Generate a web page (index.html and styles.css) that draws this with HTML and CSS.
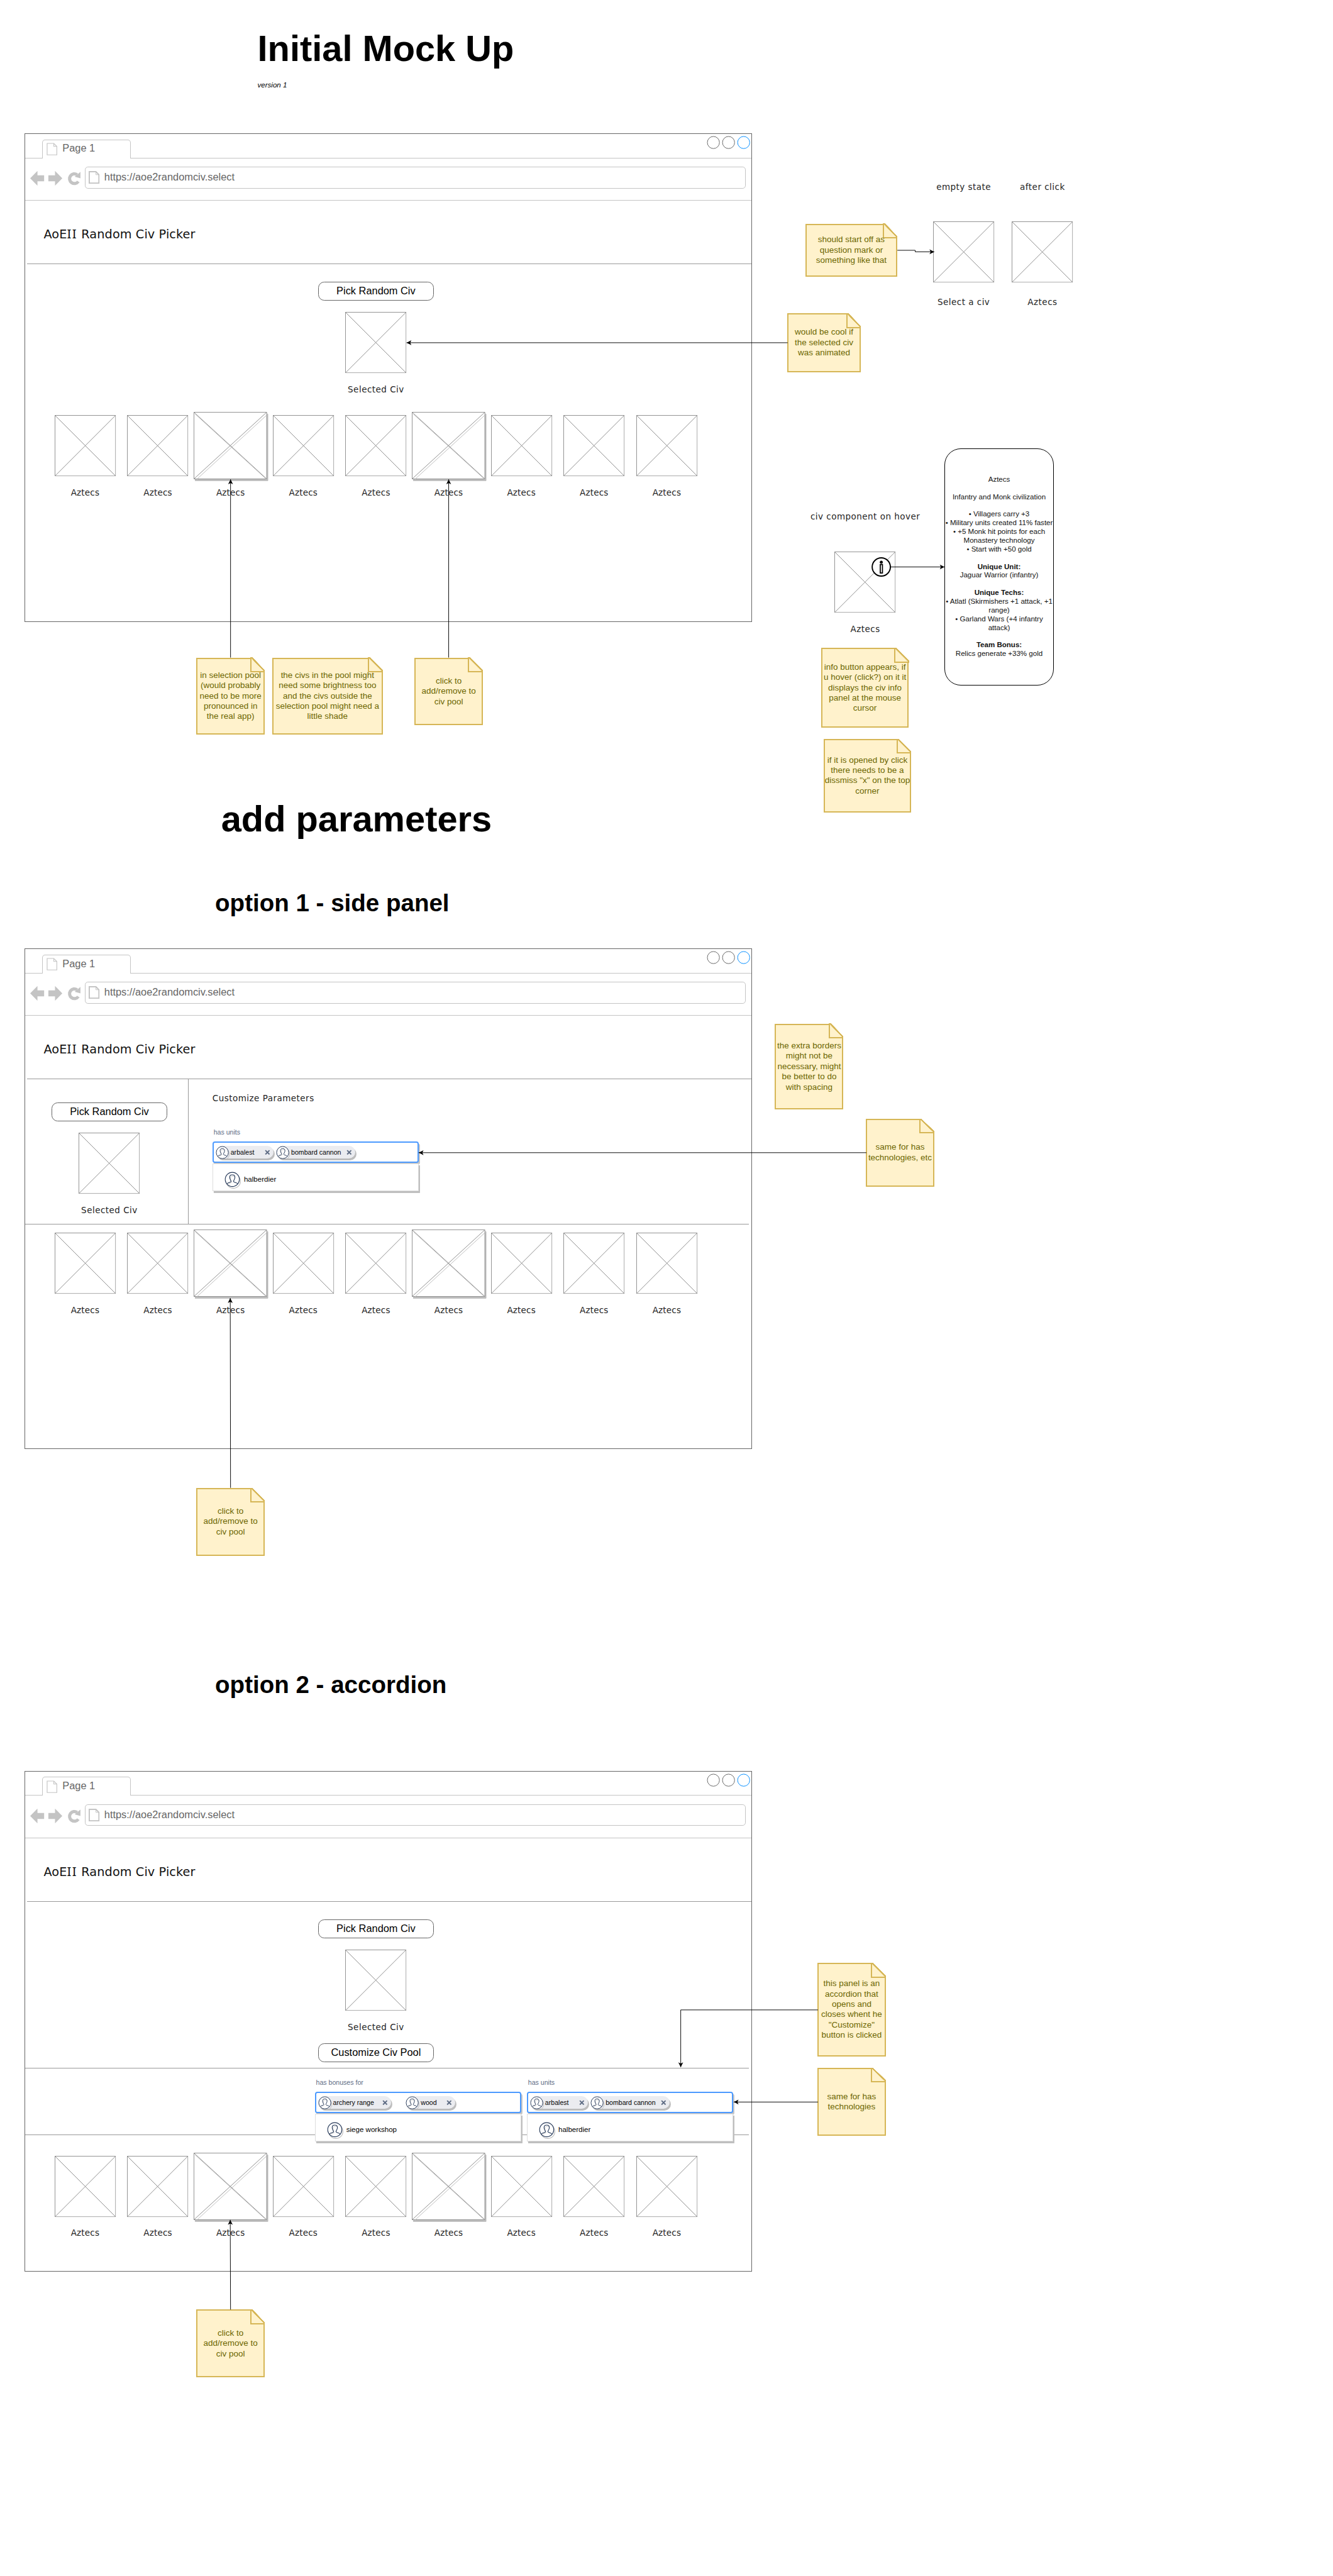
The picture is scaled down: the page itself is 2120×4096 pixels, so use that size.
FILE: index.html
```html
<!DOCTYPE html>
<html lang="en">
<head>
<meta charset="utf-8">
<title>AoEII Random Civ Picker - Mock Up</title>
<link rel="stylesheet" href="styles.css">
</head>
<body>
<svg class="defs" width="0" height="0" aria-hidden="true">
  <symbol id="pic" viewBox="0 0 101 101"><path d="M.5.5h100v100H.5zM.5.5l100 100M100.5.5l-100 100" fill="none" stroke="#8c8c8c"/></symbol>
  <symbol id="pic-big" viewBox="0 0 124 115">
    <path d="M2.500 3.500h120v110h-120z" fill="#bdbdbd" stroke="#bdbdbd"/>
    <path d="M.5.5h120v110H.5z" fill="#fff" stroke="#8c8c8c"/>
    <path d="M2.500 3.500l118 108M122.500 3.500l-120 110" fill="none" stroke="#bdbdbd"/>
    <path d="M.5.5l120 110M120.500.5l-120 110" fill="none" stroke="#8c8c8c"/>
  </symbol>
  <symbol id="page" viewBox="0 0 18 21"><path d="M1 1h11l5 5v14H1zM12 1v5h5" fill="#fff" stroke="#c4c4c4" stroke-width="1.200"/></symbol>
  <symbol id="page-bold" viewBox="0 0 18 21"><path d="M1 1h11l5 5v14H1z" fill="#fff" stroke="#c4c4c4" stroke-width="2"/><path d="M12 1v5h5" fill="none" stroke="#c4c4c4"/></symbol>
  <symbol id="nav" viewBox="0 0 84 26">
    <path d="M0 13L12 .8V8h11v10H12v7.200zM53 13L41 .8V8H30v10h11v7.200z" fill="#c4c4c4"/>
    <path d="M79.500 18.300A8 8 0 1 1 77.500 7" fill="none" stroke="#c4c4c4" stroke-width="5.200"/>
    <path d="M83 2.300L83 13L73.500 10.500z" fill="#c4c4c4"/>
  </symbol>
  <symbol id="dots" viewBox="0 0 72 22"><g fill="#fff"><circle cx="11" cy="11" r="10" stroke="#666"/><circle cx="36" cy="11" r="10" stroke="#666"/><circle cx="61" cy="11" r="10" stroke="#008cff"/></g></symbol>
  <symbol id="user" viewBox="0 0 23 24">
    <circle cx="12.500" cy="13.500" r="10" fill="none" stroke="#bdbdbd"/>
    <circle cx="11" cy="11" r="10" fill="#fff" stroke="#253858"/>
    <path d="M5 18.200C5 15.500 10.500 17 10 14.300C8.500 12.500 8 9 9 7.500C10 6 14 6 15 7.500" fill="none" stroke="#c4c4c4" stroke-width=".8"/>
    <path d="M3.500 17.500C4 14.800 9.300 15.800 9.300 13.800C9.300 12.500 7.300 10.800 7.300 8C7.300 5.500 8.800 4.500 11 4.500S14.700 5.500 14.700 8C14.700 10.800 12.700 12.500 12.700 13.800C12.700 15.800 18 14.800 18.500 17.500" fill="none" stroke="#253858"/>
  </symbol>
  <symbol id="x" viewBox="0 0 10 10"><path d="M1.300 1.300l7.400 7.400M8.700 1.300L1.300 8.700" stroke="#5e6c84" stroke-width="2.200"/></symbol>
</svg>

<main class="canvas">
  <h1 class="heading h-title">Initial Mock Up</h1>
  <p class="version">version 1</p>
  <h1 class="heading h-params">add parameters</h1>
  <h2 class="heading h-opt1">option 1 - side panel</h2>
  <h2 class="heading h-opt2">option 2 - accordion</h2>

  <section class="window win-1">
    <header class="tabbar"><div class="tab"><svg class="i-page"><use href="#page"/></svg><span>Page 1</span></div><svg class="i-dots"><use href="#dots"/></svg></header>
    <nav class="navbar"><svg class="i-nav"><use href="#nav"/></svg><div class="url"><svg class="i-page2"><use href="#page-bold"/></svg><span>https://aoe2randomciv.select</span></div></nav>
    <div class="title"><span>AoE<i>II</i> Random Civ Picker</span></div>
    <div class="picker"><div class="btn">Pick Random Civ</div><svg class="pic"><use href="#pic"/></svg><span class="label">Selected Civ</span></div>
    <div class="pool">
      <div class="civ"><svg class="pic"><use href="#pic"/></svg><span class="label">Aztecs</span></div>
      <div class="civ"><svg class="pic"><use href="#pic"/></svg><span class="label">Aztecs</span></div>
      <div class="civ on"><svg class="pic"><use href="#pic-big"/></svg><span class="label">Aztecs</span></div>
      <div class="civ"><svg class="pic"><use href="#pic"/></svg><span class="label">Aztecs</span></div>
      <div class="civ"><svg class="pic"><use href="#pic"/></svg><span class="label">Aztecs</span></div>
      <div class="civ on"><svg class="pic"><use href="#pic-big"/></svg><span class="label">Aztecs</span></div>
      <div class="civ"><svg class="pic"><use href="#pic"/></svg><span class="label">Aztecs</span></div>
      <div class="civ"><svg class="pic"><use href="#pic"/></svg><span class="label">Aztecs</span></div>
      <div class="civ"><svg class="pic"><use href="#pic"/></svg><span class="label">Aztecs</span></div>
    </div>
  </section>

  <section class="window win-2">
    <header class="tabbar"><div class="tab"><svg class="i-page"><use href="#page"/></svg><span>Page 1</span></div><svg class="i-dots"><use href="#dots"/></svg></header>
    <nav class="navbar"><svg class="i-nav"><use href="#nav"/></svg><div class="url"><svg class="i-page2"><use href="#page-bold"/></svg><span>https://aoe2randomciv.select</span></div></nav>
    <div class="title"><span>AoE<i>II</i> Random Civ Picker</span></div>
    <div class="split">
      <div class="picker side"><div class="btn">Pick Random Civ</div><svg class="pic"><use href="#pic"/></svg><span class="label">Selected Civ</span></div>
      <div class="params">
        <span class="label">Customize Parameters</span>
        <div class="field">
          <span class="field-label">has units</span>
          <div class="select">
            <div class="chip w95"><svg class="user"><use href="#user"/></svg><span>arbalest</span><svg class="x"><use href="#x"/></svg></div>
            <div class="chip w130"><svg class="user"><use href="#user"/></svg><span>bombard cannon</span><svg class="x"><use href="#x"/></svg></div>
          </div>
          <div class="menu"><svg class="user"><use href="#user"/></svg><span>halberdier</span></div>
        </div>
      </div>
    </div>
    <div class="pool">
      <div class="civ"><svg class="pic"><use href="#pic"/></svg><span class="label">Aztecs</span></div>
      <div class="civ"><svg class="pic"><use href="#pic"/></svg><span class="label">Aztecs</span></div>
      <div class="civ on"><svg class="pic"><use href="#pic-big"/></svg><span class="label">Aztecs</span></div>
      <div class="civ"><svg class="pic"><use href="#pic"/></svg><span class="label">Aztecs</span></div>
      <div class="civ"><svg class="pic"><use href="#pic"/></svg><span class="label">Aztecs</span></div>
      <div class="civ on"><svg class="pic"><use href="#pic-big"/></svg><span class="label">Aztecs</span></div>
      <div class="civ"><svg class="pic"><use href="#pic"/></svg><span class="label">Aztecs</span></div>
      <div class="civ"><svg class="pic"><use href="#pic"/></svg><span class="label">Aztecs</span></div>
      <div class="civ"><svg class="pic"><use href="#pic"/></svg><span class="label">Aztecs</span></div>
    </div>
  </section>

  <section class="window win-3">
    <header class="tabbar"><div class="tab"><svg class="i-page"><use href="#page"/></svg><span>Page 1</span></div><svg class="i-dots"><use href="#dots"/></svg></header>
    <nav class="navbar"><svg class="i-nav"><use href="#nav"/></svg><div class="url"><svg class="i-page2"><use href="#page-bold"/></svg><span>https://aoe2randomciv.select</span></div></nav>
    <div class="title"><span>AoE<i>II</i> Random Civ Picker</span></div>
    <div class="picker"><div class="btn">Pick Random Civ</div><svg class="pic"><use href="#pic"/></svg><span class="label">Selected Civ</span><div class="btn">Customize Civ Pool</div></div>
    <div class="accordion">
      <div class="field">
        <span class="field-label">has bonuses for</span>
        <div class="select spread">
          <div class="chip w120"><svg class="user"><use href="#user"/></svg><span>archery range</span><svg class="x"><use href="#x"/></svg></div>
          <div class="chip w80"><svg class="user"><use href="#user"/></svg><span>wood</span><svg class="x"><use href="#x"/></svg></div>
        </div>
        <div class="menu"><svg class="user"><use href="#user"/></svg><span>siege workshop</span></div>
      </div>
      <div class="field">
        <span class="field-label">has units</span>
        <div class="select">
          <div class="chip w95"><svg class="user"><use href="#user"/></svg><span>arbalest</span><svg class="x"><use href="#x"/></svg></div>
          <div class="chip w130"><svg class="user"><use href="#user"/></svg><span>bombard cannon</span><svg class="x"><use href="#x"/></svg></div>
        </div>
        <div class="menu"><svg class="user"><use href="#user"/></svg><span>halberdier</span></div>
      </div>
    </div>
    <div class="pool">
      <div class="civ"><svg class="pic"><use href="#pic"/></svg><span class="label">Aztecs</span></div>
      <div class="civ"><svg class="pic"><use href="#pic"/></svg><span class="label">Aztecs</span></div>
      <div class="civ on"><svg class="pic"><use href="#pic-big"/></svg><span class="label">Aztecs</span></div>
      <div class="civ"><svg class="pic"><use href="#pic"/></svg><span class="label">Aztecs</span></div>
      <div class="civ"><svg class="pic"><use href="#pic"/></svg><span class="label">Aztecs</span></div>
      <div class="civ on"><svg class="pic"><use href="#pic-big"/></svg><span class="label">Aztecs</span></div>
      <div class="civ"><svg class="pic"><use href="#pic"/></svg><span class="label">Aztecs</span></div>
      <div class="civ"><svg class="pic"><use href="#pic"/></svg><span class="label">Aztecs</span></div>
      <div class="civ"><svg class="pic"><use href="#pic"/></svg><span class="label">Aztecs</span></div>
    </div>
  </section>

  <div class="state st-empty"><span class="label">empty state</span><svg class="pic"><use href="#pic"/></svg><span class="label">Select a civ</span></div>
  <div class="state st-after"><span class="label">after click</span><svg class="pic"><use href="#pic"/></svg><span class="label">Aztecs</span></div>
  <div class="state st-hover"><span class="label">civ component on hover</span><svg class="pic"><use href="#pic"/></svg><span class="label">Aztecs</span></div>

  <article class="info"><p>Aztecs<br><br>Infantry and Monk civilization<br><br>• Villagers carry +3<br>• Military units created 11% faster<br>• +5 Monk hit points for each<br>Monastery technology<br>• Start with +50 gold<br><br><b>Unique Unit:</b><br>Jaguar Warrior (infantry)<br><br><b>Unique Techs:</b><br>• Atlatl (Skirmishers +1 attack, +1<br>range)<br>• Garland Wars (+4 infantry<br>attack)<br><br><b>Team Bonus:</b><br>Relics generate +33% gold</p></article>

  <aside class="note n-a">should start off as<br>question mark or<br>something like that</aside>
  <aside class="note n-b">would be cool if<br>the selected civ<br>was animated</aside>
  <aside class="note n-c">info button appears, if<br>u hover (click?) on it it<br>displays the civ info<br>panel at the mouse<br>cursor</aside>
  <aside class="note n-d">if it is opened by click<br>there needs to be a<br>dissmiss "x" on the top<br>corner</aside>
  <aside class="note n-e">in selection pool<br>(would probably<br>need to be more<br>pronounced in<br>the real app)</aside>
  <aside class="note n-f">the civs in the pool might<br>need some brightness too<br>and the civs outside the<br>selection pool might need a<br>little shade</aside>
  <aside class="note n-g">click to<br>add/remove to<br>civ pool</aside>
  <aside class="note n-h">the extra borders<br>might not be<br>necessary, might<br>be better to do<br>with spacing</aside>
  <aside class="note n-i">same for has<br>technologies, etc</aside>
  <aside class="note n-j">click to<br>add/remove to<br>civ pool</aside>
  <aside class="note n-k">this panel is an<br>accordion that<br>opens and<br>closes whent he<br>"Customize"<br>button is clicked</aside>
  <aside class="note n-l">same for has<br>technologies</aside>
  <aside class="note n-m">click to<br>add/remove to<br>civ pool</aside>

  <svg class="links" viewBox="0 0 2200 4250">
    <defs><marker id="arrow" viewBox="0 0 9 9" refX="8.500" refY="4.500" markerWidth="9" markerHeight="9" markerUnits="userSpaceOnUse" orient="auto"><path d="M8.500 4.500L.5 8.500L2.500 4.500L.5.5z"/></marker></defs>
    <g fill="none" stroke="#000">
      <path d="M1481 413H1510.500V415.500H1542" marker-end="url(#arrow)"/>
      <path d="M1300 565.500H671" marker-end="url(#arrow)"/>
      <path d="M380.500 1085V791" marker-end="url(#arrow)"/>
      <path d="M740.500 1085V791" marker-end="url(#arrow)"/>
      <path d="M1470 935.500H1559" marker-end="url(#arrow)"/>
      <path d="M1430 1902H691" marker-end="url(#arrow)"/>
      <path d="M380.500 2455L380 2142" marker-end="url(#arrow)"/>
      <path d="M1350 3316.500H1123.500V3411" marker-end="url(#arrow)"/>
      <path d="M1350 3468.500H1211" marker-end="url(#arrow)"/>
      <path d="M380.500 3811L380 3663" marker-end="url(#arrow)"/>
    </g>
    <g stroke="#000"><circle cx="1454.500" cy="935.500" r="15" fill="#fff" stroke-width="2"/><rect x="1452.800" y="931.500" width="3.600" height="14" fill="#fff" stroke-width="1.800"/><circle cx="1454.500" cy="927.700" r="2.100"/></g>
  </svg>
</main>
</body>
</html>
```
FILE: styles.css
```css
* { box-sizing: border-box; }
body { margin: 0; background: #fff; overflow: hidden; font-family: "Liberation Sans", Arial, sans-serif; color: #000; }
.defs { position: absolute; }
svg { display: block; flex: none; overflow: visible; }
.canvas { position: relative; width: 2200px; height: 4250px; zoom: 0.963636; overflow: hidden; }

.heading { position: absolute; margin: 0; line-height: 1; font-weight: bold; white-space: nowrap; }
.h-title { left: 425px; top: 51px; font-size: 60px; }
.version { position: absolute; left: 425px; top: 134px; margin: 0; font-size: 12px; line-height: 14px; font-style: italic; }
.h-params { left: 365px; top: 1322px; font-size: 60px; }
.h-opt1 { left: 355px; top: 1470.500px; font-size: 40px; }
.h-opt2 { left: 355px; top: 2760.500px; font-size: 40px; }

/* Browser windows */
.window { position: absolute; left: 40px; width: 1201px; border: 1px solid #666; background: #fff; display: flex; flex-direction: column; }
.win-1 { top: 220px; height: 806px; }
.win-2 { top: 1565px; height: 826px; }
.win-3 { top: 2922px; height: 826px; }

.tabbar { flex: none; height: 40px; padding: 4px 3px 0 29px; border-bottom: 1px solid #c4c4c4; display: flex; justify-content: space-between; }
.tab { width: 146px; height: 31px; margin-top: 5px; padding-left: 6px; border: 1px solid #c4c4c4; border-bottom: 0; border-radius: 5px 5px 0 0; background: #fff; display: flex; align-items: center; gap: 8px; font-size: 17px; line-height: 20px; color: #666; }
.tab span { margin-top: -2px; }
.i-page { width: 18px; height: 21px; }
.i-dots { width: 72px; height: 22px; margin-top: -1px; margin-right: -1px; }
.navbar { flex: none; height: 70px; padding: 14px 9px 0 9px; border-bottom: 1px solid #c4c4c4; display: flex; gap: 6px; }
.i-nav { width: 84px; height: 26px; margin-top: 6px; }
.url { flex: 1; height: 36px; padding-left: 5px; border: 1px solid #c4c4c4; border-radius: 5px; display: flex; align-items: center; gap: 8px; font-size: 17px; line-height: 20px; color: #666; }
.url span { margin-top: -1px; }
.i-page2 { width: 18px; height: 21px; }
.title { flex: none; height: 105px; margin-left: 4px; padding: 7px 0 0 27px; border-bottom: 1px solid #999; display: flex; align-items: center; font: 20px "DejaVu Sans", sans-serif; letter-spacing: .1px; color: #111; white-space: nowrap; }
.title i { font: 21px "Noto Sans", sans-serif; letter-spacing: 1.500px; line-height: 1; }

.btn { width: 191px; height: 31px; border: 1px solid #666; border-radius: 10px; display: grid; place-items: center; font-size: 17px; line-height: 19px; padding-bottom: 2px; }
.pic { width: 101px; height: 101px; }
.label { height: 17px; line-height: 17px; font-family: "DejaVu Sans", sans-serif; font-size: 14px; letter-spacing: .5px; color: #222; white-space: nowrap; }
.civ .label { letter-spacing: .2px; }
.picker { flex: none; display: flex; flex-direction: column; align-items: center; padding: 29px 40px 0 0; }
.picker .pic { margin: 19px 0 18px; }
.picker .label + .btn { margin-top: 19px; }
.pool { display: flex; padding-left: 39.500px; margin-top: 29px; }
.civ { width: 120px; display: flex; flex-direction: column; align-items: center; }
.civ .pic { margin: 5px 0 18px; }
.civ.on .pic { width: 124px; height: 115px; margin: 0 -4px 9px -1px; }

.split { flex: none; height: 239px; margin-right: 4px; border-bottom: 1px solid #999; display: flex; }
.side { width: 270px; padding: 38px 0 0 10px; border-right: 1px solid #999; }
.params { padding: 23px 0 0 39.500px; }
.params .label { display: block; margin-bottom: 41px; }
.win-2 .pool { margin-top: 9px; }

.accordion { flex: none; height: 111px; margin: 9px 4px 0 0; padding: 17px 0 0 478.500px; border: solid #999; border-width: 1px 0; display: flex; gap: 9px; }
.field { width: 341px; }
.field-label { display: block; height: 14px; margin: 0 0 8px 2px; font-size: 11px; line-height: 14px; color: #5e6c84; }
.select { position: relative; height: 35px; padding-left: 4px; border: 2.200px solid #4c9aff; border-radius: 4px; background: #fff; box-shadow: 2px 3px 0 #c4c4c4; display: flex; align-items: center; gap: 5px; font-size: 11px; }
.select.spread { gap: 25px; }
.menu { height: 46px; margin-top: 1px; padding-left: 19px; border: 1px solid #ddd; background: #fff; box-shadow: 2px 3px 0 #bdbdbd; display: flex; align-items: center; gap: 5px; font-size: 12px; position: relative; }
.menu .user { width: 27px; height: 28px; margin-top: 8px; }
.menu span { margin-top: 6px; }
.chip { height: 21px; border-radius: 11px; background: #ebecf0; box-shadow: 2px 3px 0 #bdbdbd; display: flex; align-items: center; padding-right: 6px; white-space: nowrap; }
.chip .user { width: 23px; height: 24px; margin: 2px 2px 0 -1px; }
.chip .x { width: 9px; height: 9px; margin-left: auto; }
.w80 { width: 81px; } .w95 { width: 95px; } .w120 { width: 120px; } .w130 { width: 130px; }

/* Loose components on the canvas */
.state { position: absolute; width: 200px; display: flex; flex-direction: column; align-items: center; }
.state .pic { margin: 48px 0 24px; }
.st-empty { left: 1490.500px; top: 300px; }
.st-after { left: 1620.500px; top: 300px; }
.st-hover { left: 1328px; top: 844px; }
.st-hover .pic { margin: 49px 0 18px; }
.info { position: absolute; left: 1559px; top: 740px; width: 180px; height: 391px; border: 1px solid #000; border-radius: 27px; background: #fff; display: grid; place-items: center; }
.info p { margin: 0; font-size: 12px; line-height: 14.400px; text-align: center; white-space: nowrap; color: #111; }

/* Sticky notes: the folded corner sits behind the text */
.note { position: absolute; isolation: isolate; border: 2.200px solid #d6b656; background: #fff2cc; color: #6b6600; display: grid; place-items: center; text-align: center; font-size: 14px; line-height: 17px; white-space: nowrap; }
.note::after { content: ""; position: absolute; z-index: -1; right: -2.200px; top: -2.200px; width: 22.500px; height: 22.500px; border: solid #d6b656; border-width: 0 0 2.200px 2.200px; background: linear-gradient(to top right, #fff2cc 45%, #d6b656 46% 53%, #fff 54%); }
.n-a { left: 1329px; top: 369px; width: 152px; height: 88px; }
.n-b { left: 1299px; top: 517px; width: 122px; height: 97px; }
.n-c { left: 1355px; top: 1069px; width: 145px; height: 132px; }
.n-d { left: 1359px; top: 1219px; width: 145px; height: 122px; }
.n-e { left: 324px; top: 1085px; width: 113px; height: 127px; }
.n-f { left: 449px; top: 1085px; width: 183px; height: 127px; }
.n-g { left: 684px; top: 1085px; width: 113px; height: 112px; }
.n-h { left: 1279px; top: 1689px; width: 113px; height: 142px; }
.n-i { left: 1429px; top: 1846px; width: 113px; height: 112px; }
.n-j { left: 324px; top: 2455px; width: 113px; height: 112px; }
.n-k { left: 1349px; top: 3239px; width: 113px; height: 154px; }
.n-l { left: 1349px; top: 3412px; width: 113px; height: 112px; }
.n-m { left: 324px; top: 3811px; width: 113px; height: 112px; }
.links { position: absolute; left: 0; top: 0; width: 2200px; height: 4250px; pointer-events: none; }
```
